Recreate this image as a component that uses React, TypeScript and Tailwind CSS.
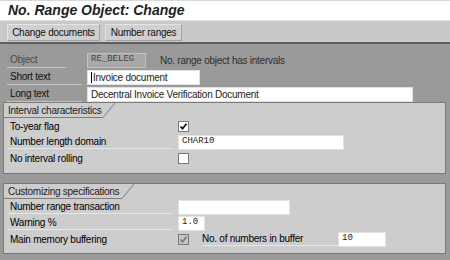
import type { ReactNode } from "react";

const sans = "font-['Liberation_Sans',Arial,sans-serif]";
const mono = "font-['Liberation_Mono','Courier_New',monospace]";

function Checkbox({ checked, disabled }: { checked?: boolean; disabled?: boolean }) {
  return (
    <span
      className={`flex h-[11px] w-[11px] items-center justify-center border border-[#7a7a7a] ${
        disabled ? "bg-[#c4c4c4]" : "bg-white"
      }`}
    >
      {checked && (
        <svg width="9" height="9" viewBox="0 0 9 9">
          <path
            d="M1.5 4.5 L3.5 6.8 L7.5 1.8"
            fill="none"
            stroke={disabled ? "#777" : "#000"}
            strokeWidth="1.6"
          />
        </svg>
      )}
    </span>
  );
}

function GroupTab({ title, width }: { title: string; width: number }) {
  return (
    <div className="flex h-[15px] items-stretch">
      <div
        className="flex items-center border-b border-[#7d7d7d] pl-[4px] text-[#1c1c1c]"
        style={{ width }}
      >
        {title}
      </div>
      <svg width="12" height="15" viewBox="0 0 12 15" className="block">
        <line x1="0" y1="14.5" x2="12" y2="0" stroke="#7d7d7d" strokeWidth="1" />
      </svg>
    </div>
  );
}

function GroupRow({
  label,
  underline,
  children,
}: {
  label: string;
  underline?: boolean;
  children: ReactNode;
}) {
  return (
    <div className="flex h-[16px] items-center">
      <div className="flex h-full w-[174px] items-center pl-[4px]">
        <span
          className={`flex h-[14px] w-[165px] items-center pl-[2px] ${
            underline ? "border-b border-[#e6e6e6]" : ""
          }`}
        >
          {label}
        </span>
      </div>
      <div className="flex items-center">{children}</div>
    </div>
  );
}

function Input({ width, children, monoText }: { width: number; children?: ReactNode; monoText?: boolean }) {
  return (
    <div
      className={`flex h-[15px] items-center border border-[#e2e2e2] bg-white pl-[3px] text-[#1c1c1c] ${
        monoText ? `${mono} text-[9px] tracking-normal` : ""
      }`}
      style={{ width }}
    >
      {children}
    </div>
  );
}

function TopRow({
  label,
  lineWidth,
  muted,
  children,
}: {
  label: string;
  lineWidth: number;
  muted?: boolean;
  children: ReactNode;
}) {
  return (
    <div className="flex h-[16px] items-center">
      <div className="flex h-full w-[87px] items-center pl-[7px]">
        <span
          className={`flex h-[15px] items-center border-b border-[#c4c4c4] pl-[3px] ${
            muted ? "text-[#4a4a4a]" : "text-[#111]"
          }`}
          style={{ width: lineWidth }}
        >
          {label}
        </span>
      </div>
      {children}
    </div>
  );
}

export default function App() {
  return (
    <div
      className={`h-[260px] w-[450px] overflow-hidden bg-[#9a9a9a] text-[10px] tracking-[-0.25px] ${sans}`}
    >
      <div className="h-[20px] border-t border-[#d8d8d8] bg-white pl-[8px] text-[14px] font-bold italic leading-[19px] tracking-normal text-[#1e1e1e]">
        No. Range Object: Change
      </div>
      <div className="flex h-[24px] items-center gap-[5px] border-t border-[#e2e2e2] border-b-2 border-b-[#5e5e5e] bg-[#c9c9c9] px-[7px] pt-[1px]">
        <button className="h-[17px] w-[93px] border border-[#a2a2a2] border-t-[#e4e4e4] border-l-[#e4e4e4] bg-[#d0d0d0] text-[#111]">
          Change documents
        </button>
        <button className="h-[17px] w-[77px] border border-[#a2a2a2] border-t-[#e4e4e4] border-l-[#e4e4e4] bg-[#d0d0d0] text-[#111]">
          Number ranges
        </button>
      </div>

      <div className="flex flex-col pt-[8px]">
        <div className="flex flex-col gap-[1px]">
          <TopRow label="Object" lineWidth={59} muted>
            <div
              className={`flex h-[15px] w-[59px] items-center border border-[#c2c2c2] bg-[#a9a9a9] pl-[3px] text-[9px] tracking-normal text-[#444] ${mono}`}
            >
              RE_BELEG
            </div>
            <span className="ml-[14px] text-[#2e2e2e]">No. range object has intervals</span>
          </TopRow>
          <TopRow label="Short text" lineWidth={75}>
            <Input width={113}>
              <span className="mr-[1px] h-[11px] w-[1px] bg-black" />
              Invoice document
            </Input>
          </TopRow>
          <TopRow label="Long text" lineWidth={75}>
            <Input width={326}>Decentral Invoice Verification Document</Input>
          </TopRow>
        </div>

        <div className="ml-[3px] h-[72px] w-[443px] border border-[#7a7a7a] bg-[#cdcdcd]">
          <GroupTab title="Interval characteristics" width={99} />
          <GroupRow label="To-year flag">
            <Checkbox checked />
          </GroupRow>
          <GroupRow label="Number length domain" underline>
            <Input width={166} monoText>
              CHAR10
            </Input>
          </GroupRow>
          <GroupRow label="No interval rolling">
            <Checkbox />
          </GroupRow>
        </div>

        <div className="ml-[3px] mt-[9px] h-[71px] w-[443px] border border-[#7a7a7a] bg-[#cdcdcd]">
          <GroupTab title="Customizing specifications" width={118} />
          <GroupRow label="Number range transaction" underline>
            <Input width={112} />
          </GroupRow>
          <GroupRow label="Warning %" underline>
            <Input width={27} monoText>
              1.0
            </Input>
          </GroupRow>
          <GroupRow label="Main memory buffering">
            <Checkbox checked disabled />
            <span className="ml-[13px] flex h-[14px] w-[136px] items-center border-b border-[#e6e6e6]">
              No. of numbers in buffer
            </span>
            <Input width={48} monoText>
              10
            </Input>
          </GroupRow>
        </div>
      </div>
    </div>
  );
}
